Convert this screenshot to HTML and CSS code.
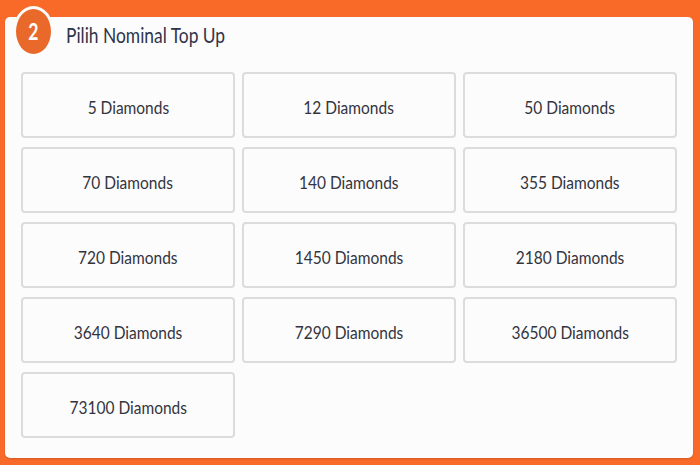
FILE: index.html
```html
<!DOCTYPE html>
<html lang="id">
<head>
<meta charset="utf-8">
<title>Pilih Nominal Top Up</title>
<link rel="stylesheet" href="styles.css">
</head>
<body>
<section class="card">
  <header class="card-head">
    <span class="step"><span class="step-num">2</span></span>
    <h2 class="title"><span class="squeeze">Pilih Nominal Top Up</span></h2>
  </header>
  <div class="grid">
    <button class="opt"><span class="label">5 Diamonds</span></button>
    <button class="opt"><span class="label">12 Diamonds</span></button>
    <button class="opt"><span class="label">50 Diamonds</span></button>
    <button class="opt"><span class="label">70 Diamonds</span></button>
    <button class="opt"><span class="label">140 Diamonds</span></button>
    <button class="opt"><span class="label">355 Diamonds</span></button>
    <button class="opt"><span class="label">720 Diamonds</span></button>
    <button class="opt"><span class="label">1450 Diamonds</span></button>
    <button class="opt"><span class="label">2180 Diamonds</span></button>
    <button class="opt"><span class="label">3640 Diamonds</span></button>
    <button class="opt"><span class="label">7290 Diamonds</span></button>
    <button class="opt"><span class="label">36500 Diamonds</span></button>
    <button class="opt"><span class="label">73100 Diamonds</span></button>
  </div>
</section>
</body>
</html>
```
FILE: styles.css
```css
html, body {
  margin: 0;
  padding: 0;
}
body {
  background: #f96a29;
  width: 700px;
  height: 465px;
  overflow: hidden;
  font-family: Lato, "Open Sans", sans-serif;
  padding: 17px 7px 0 5px;
  box-sizing: border-box;
}
.card {
  background: #fcfcfc;
  border-radius: 5px;
  height: 441px;
  box-sizing: border-box;
  padding: 0 16px 0 16px;
  position: relative;
  box-shadow: 0 1px 2px rgba(0,0,0,0.15);
}
.card-head {
  height: 55px;
  box-sizing: border-box;
  padding-top: 5px;
  display: flex;
  align-items: flex-start;
}
.step {
  position: absolute;
  left: 8px;
  top: -11px;
  width: 35px;
  height: 45px;
  border-radius: 50%;
  background: #e8692a;
  border: 3px solid #fcfcfc;
  display: flex;
  align-items: center;
  justify-content: center;
}
.step-num {
  color: #fff;
  font-size: 22px;
  font-weight: 700;
  display: inline-block;
  transform: scaleX(0.8);
}
.title {
  margin: 0 0 0 45px;
  font-size: 22px;
  line-height: 26px;
  font-weight: 400;
  color: #30344a;
}
.squeeze {
  display: inline-block;
  transform: scaleX(0.79);
  transform-origin: left center;
}
.grid {
  display: grid;
  grid-template-columns: repeat(3, 214px);
  grid-auto-rows: 66px;
  column-gap: 7px;
  row-gap: 9px;
}
.opt {
  background: #fcfcfc;
  border: 2px solid #dcdcdc;
  border-radius: 4px;
  font-family: Lato, "Open Sans", sans-serif;
  font-size: 18px;
  color: #33343e;
  padding: 4px 0 0 0;
  margin: 0;
  display: flex;
  align-items: center;
  justify-content: center;
}
.label {
  display: inline-block;
  transform: scaleX(0.86);
}
```
